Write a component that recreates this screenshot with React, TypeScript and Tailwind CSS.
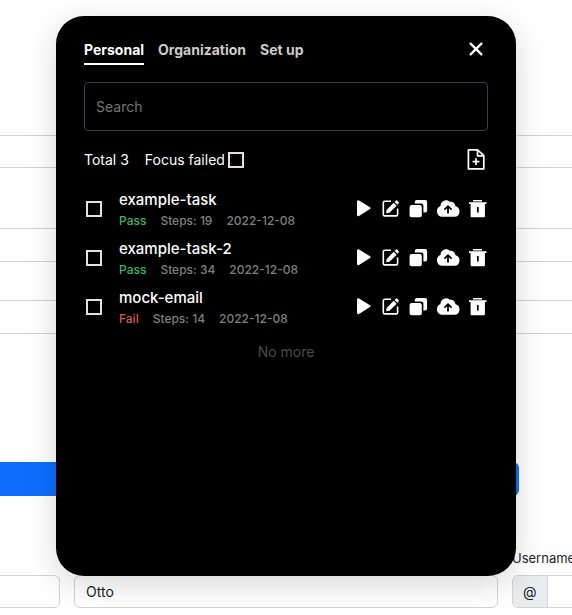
import { useState } from "react";

type Task = {
  id: number;
  name: string;
  passed: boolean;
  steps: number;
  date: string;
};

const tasks: Task[] = [
  { id: 1, name: "example-task", passed: true, steps: 19, date: "2022-12-08" },
  { id: 2, name: "example-task-2", passed: true, steps: 34, date: "2022-12-08" },
  { id: 3, name: "mock-email", passed: false, steps: 14, date: "2022-12-08" },
];

const tabs = ["Personal", "Organization", "Set up"];

const checkboxClass =
  "size-4 shrink-0 appearance-none border-2 border-[#e2e2e2] bg-black checked:bg-white";
const fieldClass =
  "block w-full rounded-md border border-[#ced4da] bg-white px-[11px] text-sm text-[#212529]";

function PlayIcon() {
  return (
    <svg width="16" height="20" viewBox="0 0 16 20" fill="currentColor" aria-hidden="true">
      <path d="M1 2.6C1 1.4 2 .8 3 1.4L14 8.2c.9.5.9 1.2 0 1.7L3 16.9C2 17.5 1 16.9 1 15.8Z" />
    </svg>
  );
}

function EditIcon() {
  return (
    <svg width="20" height="20" viewBox="0 0 20 20" fill="none" aria-hidden="true">
      <path
        d="M11 2.3H4.8Q3.3 2.3 3.3 3.8V15.4Q3.3 16.9 4.8 16.9H16.1Q17.6 16.9 17.6 15.4V9.5"
        stroke="currentColor"
        strokeWidth="1.6"
      />
      <path
        d="M6.6 10.9 13.7 3.8 16.6 6.7 9.5 13.8 6.2 14.2ZM14.6 2.9 15.8 1.7Q16.6 1 17.4 1.7L18.6 2.9Q19.3 3.7 18.6 4.5L17.4 5.7Z"
        fill="currentColor"
      />
    </svg>
  );
}

function CopyIcon() {
  return (
    <svg width="20" height="20" viewBox="0 0 20 20" fill="currentColor" aria-hidden="true">
      <rect x="1.6" y="6" width="12.2" height="12.2" rx="2" />
      <path d="M6.8 3.1Q6.8 1.1 8.8 1.1H17.1Q19.1 1.1 19.1 3.1V11.4Q19.1 13.4 17.1 13.4H15.4V6.5Q15.4 4.5 13.4 4.5H6.8Z" />
    </svg>
  );
}

function CloudUploadIcon() {
  return (
    <svg width="24" height="20" viewBox="0 0 24 20" fill="currentColor" aria-hidden="true">
      <path
        fillRule="evenodd"
        d="M5.7 17.8A5.7 5.7 0 0 1 4.5 6.9 5.7 5.7 0 0 1 8.7 1.5C10.5.8 12.4 1.3 13.7 2.7 16.7 2.2 19.3 4.3 19.5 7.2A5.4 5.4 0 0 1 18.5 17.8ZM12 5.9 7.8 10.1 9 11.3 11.1 9.2V14.5H12.9V9.2L15 11.3 16.2 10.1Z"
      />
    </svg>
  );
}

function TrashIcon() {
  return (
    <svg width="20" height="20" viewBox="0 0 20 20" fill="currentColor" aria-hidden="true">
      <path d="M5 1H14V2.4H5ZM1 3.2H18.5V5.1H1Z" />
      <path
        fillRule="evenodd"
        d="M2.6 5H16.9V17.3Q16.9 18.2 16 18.2H3.5Q2.6 18.2 2.6 17.3ZM9 8V13.5H10.7V8Z"
      />
    </svg>
  );
}

function CloseIcon() {
  return (
    <svg width="24" height="24" viewBox="0 0 24 24" fill="none" aria-hidden="true">
      <path
        d="M6.6 6.6 17.4 17.4M17.4 6.6 6.6 17.4"
        stroke="currentColor"
        strokeWidth="2.3"
        strokeLinecap="round"
      />
    </svg>
  );
}

function FileAddIcon() {
  return (
    <svg
      width="24"
      height="24"
      viewBox="0 0 24 24"
      fill="none"
      stroke="currentColor"
      strokeWidth="1.7"
      strokeLinejoin="round"
      aria-hidden="true"
    >
      <path d="M13.6 1.8H4.4V20.8H19.8V7.6ZM13.5 2V7.9H19.6M12 10.3V17.1M8.6 13.7H15.4" />
    </svg>
  );
}

const actions = [
  { label: "Run", Icon: PlayIcon },
  { label: "Edit", Icon: EditIcon },
  { label: "Duplicate", Icon: CopyIcon },
  { label: "Upload", Icon: CloudUploadIcon },
  { label: "Delete", Icon: TrashIcon },
];

function TaskRow({ task }: { task: Task }) {
  return (
    <li className="flex items-center">
      <input type="checkbox" aria-label={task.name} className={"ml-0.5 " + checkboxClass} />
      <div className="ml-[17px] min-w-0 flex-1">
        <h3 className="truncate text-[15px] leading-6 font-medium text-white">{task.name}</h3>
        <p className="flex gap-3.5 text-xs leading-[18px] font-medium text-[#7f7f7f]">
          <span className={task.passed ? "text-[#38b769]" : "text-[#d85755]"}>
            {task.passed ? "Pass" : "Fail"}
          </span>
          <span>Steps: {task.steps}</span>
          <span>{task.date}</span>
        </p>
      </div>
      <div className="flex gap-2 text-white">
        {actions.map(({ label, Icon }) => (
          <button key={label} type="button" aria-label={label + " " + task.name}>
            <Icon />
          </button>
        ))}
      </div>
    </li>
  );
}

function TaskPanel() {
  const [active, setActive] = useState("Personal");
  return (
    <section
      role="dialog"
      aria-label="Tasks"
      className="absolute inset-x-14 top-4 min-h-[560px] rounded-[28px] bg-black px-7 pt-6 text-sm text-white shadow-[0_8px_32px_rgba(0,0,0,0.16)]"
    >
      <header className="flex items-start justify-between">
        <nav className="flex gap-3.5 font-bold">
          {tabs.map((tab) => (
            <button
              key={tab}
              type="button"
              onClick={() => setActive(tab)}
              className={
                "border-b-2 pb-1 leading-[19px] " +
                (tab === active ? "border-white text-white" : "border-transparent text-[#cccccc]")
              }
            >
              {tab}
            </button>
          ))}
        </nav>
        <button type="button" aria-label="Close" className="-mt-[3px]">
          <CloseIcon />
        </button>
      </header>

      <input
        type="search"
        aria-label="Search tasks"
        placeholder="Search"
        className="mt-[17px] block h-[49px] w-full rounded-sm border border-[#334155] bg-black px-[11px] placeholder:text-[#757575]"
      />

      <div className="mt-[18px] flex h-[22px] items-center">
        <span>Total 3</span>
        <label className="ml-4 flex items-center gap-[3px]">
          Focus failed
          <input type="checkbox" className={checkboxClass} />
        </label>
        <button type="button" aria-label="New task" className="ml-auto">
          <FileAddIcon />
        </button>
      </div>

      <ul className="mt-[17px] flex flex-col gap-[7px]">
        {tasks.map((task) => (
          <TaskRow key={task.id} task={task} />
        ))}
      </ul>
      <p className="mt-3.5 text-center leading-5 text-[#4c4c4c]">No more</p>
    </section>
  );
}

export default function App() {
  return (
    <div className="relative min-h-screen overflow-hidden bg-white font-['Inter','Liberation_Sans',sans-serif]">
      <form className="-mx-[364px] pt-[135px] text-[#212529]">
        <input aria-label="Email" className={"h-[33px] " + fieldClass} />
        <input aria-label="Password" className={"mt-[60px] h-[34px] " + fieldClass} />
        <input aria-label="Address" className={"mt-[38px] h-[34px] " + fieldClass} />
        <button
          type="button"
          aria-label="Submit"
          className="mt-32 block h-[34px] w-[883px] rounded-md bg-[#0d6efd]"
        />
        <div className="mt-13 grid grid-cols-3 items-end gap-3.5 text-sm">
          <input aria-label="First name" className={"h-[33px] " + fieldClass} />
          <input aria-label="Last name" defaultValue="Otto" className={"h-[33px] " + fieldClass} />
          <div>
            <label htmlFor="username" className="mb-[7px] block text-[13px] leading-5">
              Username
            </label>
            <div className="flex h-[33px] overflow-hidden rounded-md border border-[#ced4da]">
              <span className="flex items-center border-r border-[#ced4da] bg-[#e9ecef] px-2.5">
                @
              </span>
              <input id="username" className="min-w-0 flex-1 bg-white px-[11px]" />
            </div>
          </div>
        </div>
      </form>
      <TaskPanel />
    </div>
  );
}
